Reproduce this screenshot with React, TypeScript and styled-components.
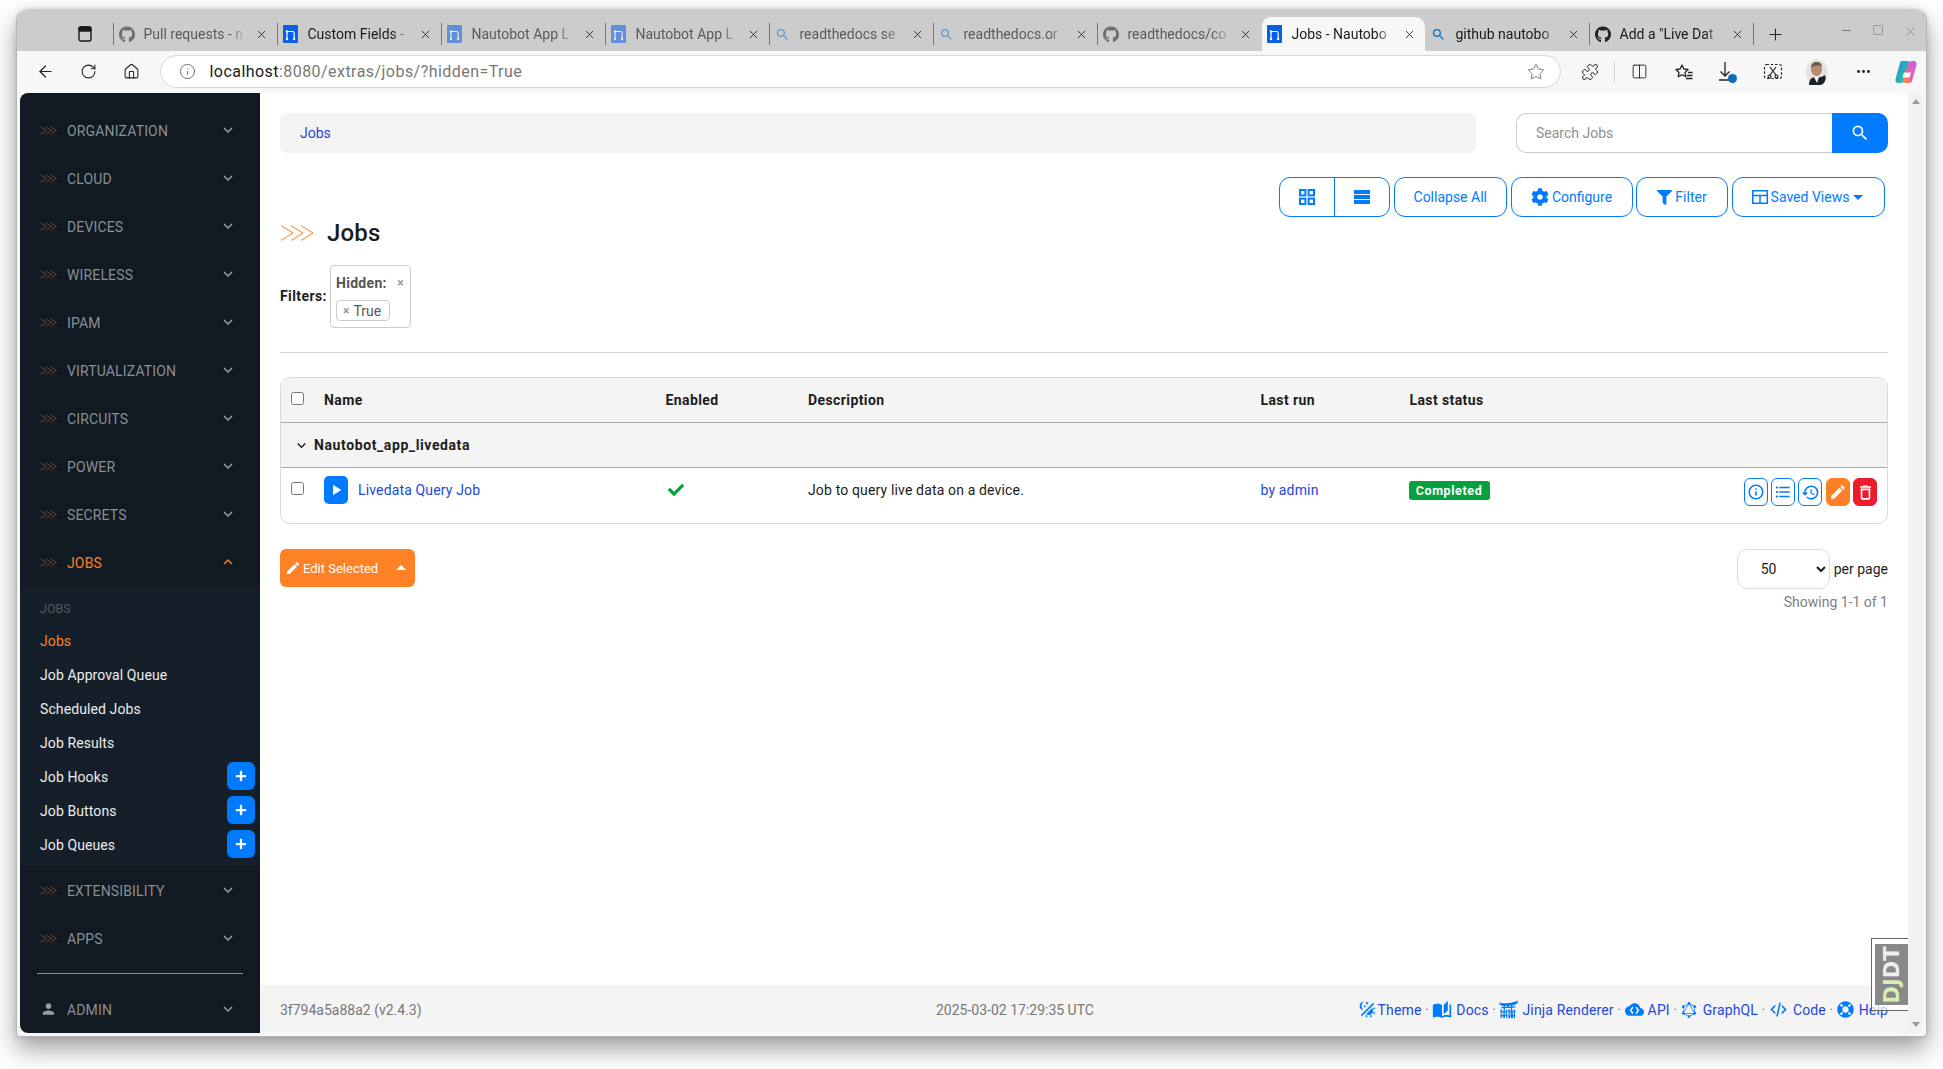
import React from "react";
import styled, { createGlobalStyle } from "styled-components";
import { ArrowLeft, RotateCw, Home, Info, Star, Puzzle, Columns2, MoreHorizontal, Plus, X, Minus, Square } from "lucide-react";
import { FaGithub, FaCog, FaFilter, FaCheck, FaPlus, FaLifeRing } from "react-icons/fa";
import {
  MdKeyboardArrowDown,
  MdKeyboardArrowUp,
  MdSearch,
  MdEdit,
  MdPlayArrow,
  MdPerson,
  MdInfoOutline,
  MdFormatListBulleted,
  MdHistory,
  MdOutlineDelete,
  MdArrowDropDown,
  MdArrowDropUp,
} from "react-icons/md";
import { SiJinja, SiGraphql } from "react-icons/si";

const FONT = `Roboto, "Noto Sans", sans-serif`;
const BLUE = "#007bff";
const LINK = "#2348dc";
const ORANGE = "#ff8125";

const Global = createGlobalStyle`
  html, body { margin: 0; padding: 0; background: #fff; overflow: hidden; }
  body { font-family: ${FONT}; font-size: 14px; color: #1c1c1c; }
  * { box-sizing: border-box; }
`;

const Desktop = styled.div`
  width: 1943px;
  height: 1069px;
  padding: 9px 16px 32px;
  background: #fff;
`;

const Window = styled.div`
  width: 1911px;
  height: 1028px;
  display: flex;
  flex-direction: column;
  background: #f7f7f7;
  border: 1px solid #b5b5b5;
  border-top-color: #ccc;
  border-radius: 12px 12px 4px 4px;
  box-shadow: 0 12px 26px rgba(0, 0, 0, 0.38), 0 0 6px rgba(0, 0, 0, 0.12);
  overflow: hidden;
`;

const TabStrip = styled.div`
  height: 41px;
  flex: none;
  display: flex;
  align-items: flex-end;
  background: #cccccc;
`;

const StripButton = styled.div`
  width: 95.5px;
  height: 34px;
  flex: none;
  display: flex;
  align-items: center;
  justify-content: flex-end;
  padding-right: 21px;
  color: #222;
`;

const Tab = styled.div<{ $active?: boolean; $noDivider?: boolean }>`
  width: 164px;
  height: 34px;
  flex: none;
  display: flex;
  align-items: center;
  padding: 0 8px 0 5px;
  background: ${(p) => (p.$active ? "#f7f7f7" : "transparent")};
  border-radius: 9px 9px 0 0;
  border-left: 1px solid ${(p) => (p.$noDivider ? "transparent" : "#777")};
  background-clip: padding-box;
  ${(p) => (p.$noDivider ? "" : "border-image: linear-gradient(to bottom, transparent 7px, #777 7px, #777 27px, transparent 27px) 1;")}
`;

const TabIcon = styled.span<{ $dim?: boolean }>`
  width: 16px;
  height: 18px;
  flex: none;
  display: flex;
  align-items: center;
  justify-content: center;
  opacity: ${(p) => (p.$dim ? 0.55 : 1)};
`;

const TabTitle = styled.span<{ $dim?: boolean }>`
  flex: 1;
  margin-left: 9px;
  white-space: nowrap;
  font-size: 14px;
  color: ${(p) => (p.$dim ? "#5a5a5a" : "#1a1a1a")};
  -webkit-mask-image: linear-gradient(to right, #000 78%, transparent 96%);
  mask-image: linear-gradient(to right, #000 78%, transparent 96%);
`;

const TabClose = styled.span`
  width: 14px;
  flex: none;
  margin-left: 3px;
  display: flex;
  justify-content: center;
  color: #222;
`;

const NewTab = styled.div`
  width: 44px;
  height: 34px;
  flex: none;
  display: flex;
  align-items: center;
  justify-content: center;
  color: #222;
  border-left: 1px solid #777;
  border-image: linear-gradient(to bottom, transparent 7px, #777 7px, #777 27px, transparent 27px) 1;
`;

const WindowControls = styled.div`
  margin-left: auto;
  height: 41px;
  display: flex;
  align-items: flex-start;
  padding: 14px 8px 0 0;
  gap: 19px;
  color: #777;
`;

const Toolbar = styled.div`
  height: 42px;
  flex: none;
  display: flex;
  align-items: center;
  background: #f7f7f7;
  padding: 0 0 1px 19px;
  color: #222;
`;

const NavButton = styled.span`
  width: 43.5px;
  flex: none;
  display: flex;
  align-items: center;
`;

const AddressBar = styled.div`
  width: 1401px;
  height: 33px;
  flex: none;
  margin-left: -7px;
  display: flex;
  align-items: center;
  background: #fff;
  border: 1px solid #d6d6d6;
  border-radius: 17px;
  padding: 0 15px 0 18px;
`;

const Url = styled.div`
  margin-left: 14px;
  font-size: 16px;
  color: #777;
  letter-spacing: 0.45px;
`;

const UrlHost = styled.span`
  color: #1a1a1a;
`;

const StarSlot = styled.span`
  margin-left: auto;
  display: flex;
  color: #666;
`;

const ToolIcons = styled.div`
  display: flex;
  align-items: center;
  margin-left: 20px;
`;

const ToolIcon = styled.span<{ $w: number }>`
  width: ${(p) => p.$w}px;
  flex: none;
  display: flex;
  justify-content: center;
  align-items: center;
`;

const ToolSep = styled.span`
  width: 1px;
  height: 20px;
  background: #d4d4d4;
  flex: none;
`;

const Page = styled.div`
  flex: 1;
  min-height: 0;
  margin: 0 3px 3px;
  display: flex;
  background: #fff;
  border-radius: 8px;
  overflow: hidden;
`;

const Sidebar = styled.nav`
  width: 240px;
  flex: none;
  display: flex;
  flex-direction: column;
  padding-top: 13px;
  background: #111923;
`;

const NavItem = styled.div<{ $open?: boolean }>`
  height: 48px;
  flex: none;
  display: flex;
  align-items: center;
  padding: 0 20px;
  font-size: 14px;
  letter-spacing: 0.15px;
  color: ${(p) => (p.$open ? "#ff7f26" : "#8a8f94")};
`;

const NavMark = styled.span`
  width: 17px;
  flex: none;
  margin-right: 10px;
  display: flex;
  justify-content: center;
`;

const NavLabel = styled.span`
  flex: 1;
  padding-top: 1px;
`;

const NavCaret = styled.span<{ $open?: boolean }>`
  flex: none;
  display: flex;
  margin-right: 3px;
  color: ${(p) => (p.$open ? "#ff7f26" : "#9a9ea3")};
`;

const SubMenu = styled.div`
  height: 280px;
  flex: none;
  padding-bottom: 5px;
  background: #141f2a;
`;

const SubHeading = styled.div`
  height: 37px;
  padding: 8px 0 0 20px;
  display: flex;
  align-items: center;
  font-size: 12.5px;
  color: #515a63;
`;

const SubRow = styled.div<{ $current?: boolean }>`
  height: 34px;
  display: flex;
  align-items: center;
  justify-content: space-between;
  padding: 0 5px 0 20px;
  font-size: 14px;
  letter-spacing: 0.1px;
  color: ${(p) => (p.$current ? "#ff7f26" : "#ececec")};
`;

const SubText = styled.span`
  padding-top: 1px;
`;

const AddButton = styled.span`
  width: 28px;
  height: 28px;
  display: flex;
  align-items: center;
  justify-content: center;
  background: ${BLUE};
  border-radius: 6px;
  color: #fff;
`;

const SideRule = styled.div`
  margin: auto 17px 11px;
  height: 1px;
  background: #8b8f94;
`;

const Main = styled.main`
  flex: 1;
  min-width: 0;
  position: relative;
  display: flex;
  flex-direction: column;
`;

const Content = styled.div`
  flex: 1;
  padding: 20px 20px 0;
`;

const TopRow = styled.div`
  display: flex;
  align-items: stretch;
  justify-content: space-between;
  height: 40px;
`;

const Breadcrumb = styled.div`
  width: 1196px;
  display: flex;
  align-items: center;
  padding-left: 20px;
  background: #f4f4f4;
  border-radius: 7px;
`;

const TextLink = styled.a`
  color: ${LINK};
  text-decoration: none;
`;

const SearchBox = styled.div`
  width: 372px;
  display: flex;
`;

const SearchField = styled.div`
  flex: 1;
  display: flex;
  align-items: center;
  padding-left: 19px;
  border: 1px solid #ccc;
  border-right: none;
  border-radius: 10px 0 0 10px;
  color: #8f8f8f;
`;

const SearchButton = styled.div`
  width: 56px;
  display: flex;
  align-items: center;
  justify-content: center;
  background: ${BLUE};
  color: #fff;
  border-radius: 0 10px 10px 0;
`;

const ActionBar = styled.div`
  margin-top: 24px;
  height: 40px;
  display: flex;
  justify-content: flex-end;
  gap: 3.5px;
  padding-right: 3.5px;
`;

const ButtonGroup = styled.div`
  display: flex;
  width: 111.5px;
  border: 1px solid ${BLUE};
  border-radius: 11px;
  color: ${BLUE};
`;

const GroupCell = styled.span<{ $divider?: boolean }>`
  flex: 1;
  display: flex;
  align-items: center;
  justify-content: center;
  border-left: ${(p) => (p.$divider ? `1px solid ${BLUE}` : "none")};
`;

const ToolButton = styled.button<{ $w: number }>`
  width: ${(p) => p.$w}px;
  display: flex;
  align-items: center;
  justify-content: center;
  gap: 3px;
  padding: 0;
  background: #fff;
  border: 1px solid ${BLUE};
  border-radius: 11px;
  color: ${BLUE};
  font: 14px ${FONT};
`;

const TitleRow = styled.div`
  height: 32px;
  display: flex;
  align-items: center;
  gap: 13px;
`;

const Title = styled.h1`
  margin: 0;
  font-size: 24px;
  font-weight: 500;
  letter-spacing: 0.2px;
  color: #1c1c1c;
`;

const FilterRow = styled.div`
  margin-top: 16px;
  display: flex;
  align-items: center;
  gap: 4px;
`;

const FilterLabel = styled.span`
  width: 46px;
  padding-bottom: 2px;
  font-weight: 700;
  font-size: 14px;
  letter-spacing: 0.4px;
`;

const FilterBox = styled.div`
  width: 81px;
  height: 63px;
  padding: 6px 5px;
  display: flex;
  flex-direction: column;
  gap: 6px;
  border: 1px solid #ccc;
  border-radius: 4px;
`;

const FilterHead = styled.div`
  height: 24px;
  display: flex;
  align-items: center;
  justify-content: space-between;
  font-weight: 700;
  letter-spacing: 0.3px;
  color: #555;
`;

const RemoveMark = styled.span`
  font-size: 12px;
  font-weight: 700;
  color: #999;
  margin-right: 1px;
`;

const FilterTag = styled.div`
  width: 54px;
  height: 22px;
  display: flex;
  align-items: center;
  gap: 3px;
  padding-left: 6px;
  border: 1px solid #ccc;
  border-radius: 4px;
  color: #555;
`;

const Rule = styled.hr`
  margin: 24px 0;
  height: 1px;
  border: none;
  background: #d6d6d6;
`;

const Table = styled.div`
  height: 147px;
  border: 1px solid #d9d9d9;
  border-radius: 10px;
  overflow: hidden;
`;

const COLUMNS = "43px 341.5px 142.5px 452.5px 149px 1fr auto";

const HeadRow = styled.div`
  height: 45px;
  display: grid;
  grid-template-columns: ${COLUMNS};
  align-items: center;
  background: #f4f4f4;
  border-bottom: 1px solid #aaa;
  font-weight: 700;
  letter-spacing: 0.4px;
`;

const GroupRow = styled.div`
  height: 45px;
  display: flex;
  align-items: center;
  gap: 4px;
  padding-left: 12px;
  background: #f4f4f4;
  border-bottom: 1px solid #aaa;
  font-weight: 700;
  letter-spacing: 0.6px;
  color: #1c1c1c;
`;

const BodyRow = styled.div`
  display: grid;
  grid-template-columns: ${COLUMNS};
  align-items: center;
  padding-top: 6px;
  letter-spacing: 0.15px;
`;

const CheckCell = styled.span<{ $up: number }>`
  display: flex;
  padding-left: 10px;
  margin-top: -${(p) => p.$up}px;
`;

const Check = styled.input`
  width: 13px;
  height: 13px;
  margin: 0;
`;

const NameCell = styled.span`
  display: flex;
  align-items: center;
  gap: 10px;
`;

const RunButton = styled.span`
  width: 24px;
  height: 28px;
  display: flex;
  align-items: center;
  justify-content: center;
  background: ${BLUE};
  border-radius: 5px;
  color: #fff;
`;

const Badge = styled.span`
  display: flex;
  width: 81px;
  height: 19px;
  margin-left: -1px;
  align-items: center;
  justify-content: center;
  background: #06a03f;
  border-radius: 3px;
  color: #fff;
  font-size: 12.5px;
  font-weight: 700;
  letter-spacing: 0.6px;
`;

const EnabledMark = styled.span`
  display: flex;
  padding-left: 2px;
  color: #06a03f;
`;

const RowActions = styled.span`
  display: flex;
  gap: 3.3px;
  padding: 4px 10px 0 0;
`;

const RowAction = styled.span<{ $fill?: string }>`
  width: 24px;
  height: 28px;
  display: flex;
  align-items: center;
  justify-content: center;
  border-radius: 6px;
  border: 1px solid ${(p) => p.$fill ?? BLUE};
  background: ${(p) => p.$fill ?? "#fff"};
  color: ${(p) => (p.$fill ? "#fff" : BLUE)};
`;

const BelowTable = styled.div`
  margin-top: 25px;
  display: flex;
  justify-content: space-between;
  align-items: flex-start;
`;

const EditButton = styled.button`
  width: 135px;
  height: 38px;
  display: flex;
  align-items: center;
  gap: 2px;
  padding: 0 0 0 5px;
  background: ${ORANGE};
  border: none;
  border-radius: 6px;
  color: #fff;
  font: 13px ${FONT};
`;

const EditCaret = styled.span`
  margin-left: auto;
  margin-right: 2px;
  display: flex;
`;

const Paging = styled.div`
  display: flex;
  flex-direction: column;
  align-items: flex-end;
  gap: 5px;
`;

const PerPage = styled.label`
  display: flex;
  align-items: center;
  gap: 4px;
`;

const PageSelect = styled.select`
  width: 93px;
  height: 40px;
  padding-left: 19px;
  background: #fff;
  border: 1px solid #ddd;
  border-radius: 10px;
  color: #1c1c1c;
  font: 14px ${FONT};
`;

const Showing = styled.div`
  color: #808080;
`;

const Footer = styled.footer`
  height: 48px;
  flex: none;
  display: grid;
  grid-template-columns: 656px auto 1fr;
  align-items: center;
  padding: 1px 20px 0;
  background: #f4f4f4;
  color: #777;
`;

const FooterLinks = styled.div`
  display: flex;
  justify-content: flex-end;
  align-items: center;
  gap: 3.5px;
  letter-spacing: 0.15px;
  color: #777;
`;

const FooterLink = styled.a<{ $gap?: number }>`
  display: flex;
  align-items: center;
  gap: ${(p) => p.$gap ?? 4}px;
  color: ${LINK};
  text-decoration: none;
`;

const FooterIcon = styled.span`
  display: flex;
  color: ${BLUE};
`;

const Debug = styled.div`
  position: absolute;
  right: 0;
  bottom: 22px;
  width: 37px;
  height: 73px;
  padding: 5px 0 5px 3px;
  background: rgba(255, 255, 255, 0.7);
  border: 1px solid #666;
  border-right: none;
`;

const DebugInner = styled.div`
  height: 100%;
  display: flex;
  align-items: center;
  justify-content: center;
  background: #888;
`;

const DebugText = styled.span`
  transform: rotate(-90deg);
  font: 700 21px "DejaVu Sans", sans-serif;
  color: #eee;
  white-space: nowrap;
`;

const DebugAccent = styled.span`
  color: #d6efb4;
`;

const ScrollBar = styled.div`
  width: 15px;
  flex: none;
  display: flex;
  flex-direction: column;
  justify-content: space-between;
  align-items: center;
  padding: 6px 0;
  background: #f1f1f1;
`;

const ScrollArrow = styled.span<{ $down?: boolean }>`
  width: 0;
  height: 0;
  border-left: 4px solid transparent;
  border-right: 4px solid transparent;
  ${(p) => (p.$down ? "border-top: 5px solid #9a9a9a;" : "border-bottom: 5px solid #9a9a9a;")}
`;

const Mark = ({ w, h, color, sw = 1 }: { w: number; h: number; color: string; sw?: number }) => (
  <svg width={w} height={h} viewBox="0 0 34 18" preserveAspectRatio="none" fill="none" stroke={color} strokeWidth={sw}>
    <polyline points="1,1.5 13,9 1,16.5" />
    <polyline points="11,1.5 23,9 11,16.5" />
    <polyline points="21,1.5 33,9 21,16.5" />
  </svg>
);

const NFav = () => (
  <svg width="15" height="18" viewBox="0 0 15 18">
    <rect width="15" height="18" rx="1" fill="#0a5fe6" />
    <path d="M4 14V6.500h5.500a1.600 1.600 0 0 1 1.600 1.600V14" fill="none" stroke="#fff" strokeWidth="1.2" />
    <circle cx="4" cy="14" r="1.200" fill="#fff" />
    <circle cx="11.100" cy="14" r="1.200" fill="#fff" />
    <circle cx="4" cy="6.500" r="1.200" fill="#fff" />
  </svg>
);

const SidePanelIcon = () => (
  <svg width="14" height="16" viewBox="0 0 14 16" fill="none" stroke="#1a1a1a" strokeWidth="1.4">
    <rect x="1" y="1" width="12" height="14" rx="2" />
    <rect x="1" y="1" width="12" height="4" rx="1.5" fill="#1a1a1a" />
  </svg>
);

const GridIcon = () => (
  <svg width="16" height="16" viewBox="0 0 16 16" fill="none" stroke={BLUE} strokeWidth="2">
    <rect x="1" y="1" width="5.4" height="5.4" />
    <rect x="9.6" y="1" width="5.4" height="5.4" />
    <rect x="1" y="9.6" width="5.4" height="5.4" />
    <rect x="9.6" y="9.6" width="5.4" height="5.4" />
  </svg>
);

const BarsIcon = () => (
  <svg width="16" height="14" viewBox="0 0 16 14" fill={BLUE}>
    <rect width="16" height="4" />
    <rect y="5" width="16" height="4" />
    <rect y="10" width="16" height="4" />
  </svg>
);

const ViewsIcon = () => (
  <svg width="16" height="14" viewBox="0 0 16 14" fill="none" stroke={BLUE} strokeWidth="1.5">
    <rect x="0.75" y="0.75" width="14.5" height="12.5" />
    <path d="M1 5.5h14M8 5.5v8" />
  </svg>
);

const ThemeIcon = () => (
  <svg width="19" height="19" viewBox="0 0 24 24" fill={BLUE}>
    <path d="M7.5,2C5.71,3.15 4.5,5.18 4.5,7.5C4.5,9.82 5.71,11.85 7.53,13C4.46,13 2,10.54 2,7.5A5.5,5.5 0 0,1 7.5,2M19.07,3.5L20.5,4.93L4.93,20.5L3.5,19.07L19.07,3.5M12.89,5.93L11.41,5L9.97,6L10.39,4.3L9,3.24L10.75,3.12L11.33,1.47L12,3.1L13.73,3.13L12.38,4.26L12.89,5.93M9.59,9.54L8.43,8.81L7.31,9.59L7.65,8.27L6.56,7.44L7.92,7.35L8.37,6.06L8.88,7.33L10.24,7.36L9.19,8.23L9.59,9.54M19,13.5A5.5,5.5 0 0,1 13.5,19C12.28,19 11.15,18.6 10.24,17.93L17.93,10.24C18.6,11.15 19,12.28 19,13.5M14.6,20.08L17.37,18.93L17.13,22.28L14.6,20.08M18.93,17.38L20.08,14.61L22.28,17.15L18.93,17.38M20.08,12.42L18.94,9.64L22.28,9.88L20.08,12.42M9.63,18.93L12.4,20.08L9.87,22.27L9.63,18.93Z" />
  </svg>
);

const BookIcon = () => (
  <svg width="20" height="20" viewBox="0 0 24 24" fill={BLUE}>
    <path d="M19 1L14 6V17L19 12.5V1M21 5V18.5C19.9 18.15 18.7 18 17.5 18C15.8 18 13.35 18.65 12 19.5V6C10.55 4.9 8.45 4.5 6.5 4.5C4.55 4.5 2.45 4.9 1 6V20.65C1 20.9 1.25 21.15 1.5 21.15C1.6 21.15 1.65 21.1 1.75 21.1C3.1 20.45 5.05 20 6.5 20C8.45 20 10.55 20.4 12 21.5C13.35 20.65 15.8 20 17.5 20C19.15 20 20.85 20.3 22.25 21.05C22.35 21.1 22.4 21.1 22.5 21.1C22.75 21.1 23 20.85 23 20.6V6C22.4 5.55 21.75 5.25 21 5Z" />
  </svg>
);

const XmlIcon = () => (
  <svg width="19" height="19" viewBox="0 0 24 24" fill={BLUE}>
    <path d="M12.89,3L14.85,3.4L11.11,21L9.15,20.6L12.89,3M19.59,12L16,8.41V5.58L22.42,12L16,18.41V15.58L19.59,12M1.58,12L8,5.58V8.41L4.41,12L8,15.58V18.41L1.58,12Z" />
  </svg>
);

const CloudIcon = () => (
  <svg width="19" height="17" viewBox="0 0 24 20">
    <path fill={BLUE} d="M19.35 6.04C18.67 2.59 15.64 0 12 0 9.11 0 6.6 1.64 5.35 4.04 2.34 4.36 0 6.91 0 10c0 3.31 2.69 6 6 6h13c2.76 0 5-2.24 5-5 0-2.64-2.05-4.78-4.65-4.96z" transform="translate(0 2)" />
    <path fill="none" stroke="#fff" strokeWidth="1.8" d="M10 7l-3 4 3 4M14 7l3 4-3 4" />
  </svg>
);

const FavStar = () => (
  <svg width="20" height="20" viewBox="0 0 20 20" fill="none" stroke="#222" strokeWidth="1.3" strokeLinejoin="round">
    <path d="M8 3l1.9 4 4.1.5-3 3 .8 4.3L8 12.7 4.200 14.800 5 10.500l-3-3 4.100-.5z" />
    <path d="M14 10.500h4.500M13 13.500h5.500M12 16.500h6.500" />
  </svg>
);

const DownloadIcon = () => (
  <svg width="22" height="24" viewBox="0 0 22 24">
    <path d="M8 2v14M3.500 11.500L8 16l4.500-4.500M2 20h12" fill="none" stroke="#222" strokeWidth="1.3" />
    <circle cx="15.500" cy="18.500" r="4.500" fill="#0f6cbd" />
  </svg>
);

const ShotIcon = () => (
  <svg width="20" height="20" viewBox="0 0 20 20" fill="none" stroke="#222" strokeWidth="1.2">
    <rect x="1.500" y="2.500" width="17" height="14" rx="2" strokeDasharray="2.500 1.800" />
    <path d="M7 5l6 8M13 5l-6 8" />
    <circle cx="6.500" cy="14.500" r="1.500" />
    <circle cx="13.500" cy="14.500" r="1.500" />
  </svg>
);

const Avatar = () => (
  <svg width="26" height="26" viewBox="0 0 26 26">
    <ellipse cx="13" cy="13" rx="11" ry="13" fill="#e3e3e0" />
    <ellipse cx="12.500" cy="10" rx="5.500" ry="7" fill="#b98a72" />
    <path d="M7 9c0-5 3-6 5.500-6S18 4 18 8c-2-2-8-2-11 1z" fill="#6f5a4d" />
    <path d="M5 26c0-6 3-8 7-8s5 1 9-2c1 3 1 6-2 9-4 2-10 2-14 1z" fill="#1d2228" />
    <path d="M10 18l3 6 2-6z" fill="#f4f4f4" />
  </svg>
);

const CopilotIcon = () => (
  <svg width="24" height="24" viewBox="0 0 24 24">
    <defs>
      <linearGradient id="cpA" x1="0" y1="0" x2="1" y2="1">
        <stop offset="0" stopColor="#1f8fe6" />
        <stop offset="1" stopColor="#2fcf8c" />
      </linearGradient>
      <linearGradient id="cpB" x1="1" y1="0" x2="0" y2="1">
        <stop offset="0" stopColor="#b36bf0" />
        <stop offset="0.6" stopColor="#ef5fa7" />
        <stop offset="1" stopColor="#f7a21b" />
      </linearGradient>
    </defs>
    <path d="M8 1h6c1 0 1.500 1 1 2L10 20c-.5 2-2 3-4 3H4c-2 0-3-2-2.500-4L6 3c.3-1.200 1-2 2-2z" fill="url(#cpA)" />
    <path d="M16 23h-6c-1 0-1.500-1-1-2l5-17c.5-2 2-3 4-3h2c2 0 3 2 2.500 4L18 21c-.3 1.200-1 2-2 2z" fill="url(#cpB)" />
    <path d="M8.500 17.500h7l1.500-5h-7z" fill="#fff" />
  </svg>
);

const tabs: { title: string; icon: "gh" | "n" | "q"; dim?: boolean; active?: boolean; noDivider?: boolean }[] = [
  { title: "Pull requests - n", icon: "gh", dim: true },
  { title: "Custom Fields - ", icon: "n" },
  { title: "Nautobot App L", icon: "n", dim: true },
  { title: "Nautobot App L", icon: "n", dim: true },
  { title: "readthedocs se", icon: "q", dim: true },
  { title: "readthedocs.or", icon: "q", dim: true },
  { title: "readthedocs/co", icon: "gh", dim: true },
  { title: "Jobs - Nautobo", icon: "n", active: true, noDivider: true },
  { title: "github nautobo", icon: "q", noDivider: true },
  { title: 'Add a "Live Dat', icon: "gh" },
];

const navTop = ["ORGANIZATION", "CLOUD", "DEVICES", "WIRELESS", "IPAM", "VIRTUALIZATION", "CIRCUITS", "POWER", "SECRETS"];
const subItems: { label: string; add?: boolean; current?: boolean }[] = [
  { label: "Jobs", current: true },
  { label: "Job Approval Queue" },
  { label: "Scheduled Jobs" },
  { label: "Job Results" },
  { label: "Job Hooks", add: true },
  { label: "Job Buttons", add: true },
  { label: "Job Queues", add: true },
];

const SideEntry = ({ label, open }: { label: string; open?: boolean }) => (
  <NavItem $open={open}>
    <NavMark>
      <Mark w={17} h={9} color="#cc6f2c" />
    </NavMark>
    <NavLabel>{label}</NavLabel>
    <NavCaret $open={open}>{open ? <MdKeyboardArrowUp size={18} /> : <MdKeyboardArrowDown size={18} />}</NavCaret>
  </NavItem>
);

const TabFavicon = ({ kind }: { kind: "gh" | "n" | "q" }) => {
  if (kind === "gh") return <FaGithub size={17} color="#222" />;
  if (kind === "n") return <NFav />;
  return <MdSearch size={15} color="#0a6cc8" />;
};

export default function App() {
  return (
    <Desktop>
      <Global />
      <Window>
        <TabStrip>
          <StripButton>
            <SidePanelIcon />
          </StripButton>
          {tabs.map((t, i) => (
            <Tab key={i} $active={t.active} $noDivider={t.noDivider}>
              <TabIcon $dim={t.dim}>
                <TabFavicon kind={t.icon} />
              </TabIcon>
              <TabTitle $dim={t.dim}>{t.title}</TabTitle>
              <TabClose>
                <X size={13} strokeWidth={1.6} />
              </TabClose>
            </Tab>
          ))}
          <NewTab>
            <Plus size={19} strokeWidth={1.3} />
          </NewTab>
          <WindowControls>
            <Minus size={13} />
            <Square size={12} strokeWidth={1.2} />
            <X size={15} strokeWidth={1.1} />
          </WindowControls>
        </TabStrip>
        <Toolbar>
          <NavButton>
            <ArrowLeft size={19} strokeWidth={1.5} />
          </NavButton>
          <NavButton>
            <RotateCw size={17} strokeWidth={1.5} />
          </NavButton>
          <NavButton>
            <Home size={17} strokeWidth={1.5} />
          </NavButton>
          <AddressBar>
            <Info size={17} strokeWidth={1.3} color="#666" />
            <Url>
              <UrlHost>localhost</UrlHost>:8080/extras/jobs/?hidden=True
            </Url>
            <StarSlot>
              <Star size={18} strokeWidth={1.2} />
            </StarSlot>
          </AddressBar>
          <ToolIcons>
            <ToolIcon $w={18}>
              <Puzzle size={18} strokeWidth={1.3} />
            </ToolIcon>
            <ToolIcon $w={15}>
              <span />
            </ToolIcon>
            <ToolSep />
            <ToolIcon $w={49}>
              <Columns2 size={17} strokeWidth={1.3} />
            </ToolIcon>
            <ToolIcon $w={40}>
              <FavStar />
            </ToolIcon>
            <ToolIcon $w={48}>
              <DownloadIcon />
            </ToolIcon>
            <ToolIcon $w={42}>
              <ShotIcon />
            </ToolIcon>
            <ToolIcon $w={46}>
              <Avatar />
            </ToolIcon>
            <ToolIcon $w={48}>
              <MoreHorizontal size={17} strokeWidth={2.2} />
            </ToolIcon>
            <ToolIcon $w={36}>
              <CopilotIcon />
            </ToolIcon>
          </ToolIcons>
        </Toolbar>
        <Page>
          <Sidebar>
            {navTop.map((n) => (
              <SideEntry key={n} label={n} />
            ))}
            <SideEntry label="JOBS" open />
            <SubMenu>
              <SubHeading>JOBS</SubHeading>
              {subItems.map((s) => (
                <SubRow key={s.label} $current={s.current}>
                  <SubText>{s.label}</SubText>
                  {s.add && (
                    <AddButton>
                      <FaPlus size={12} />
                    </AddButton>
                  )}
                </SubRow>
              ))}
            </SubMenu>
            <SideEntry label="EXTENSIBILITY" />
            <SideEntry label="APPS" />
            <SideRule />
            <NavItem>
              <NavMark>
                <MdPerson size={22} color="#9a9ea3" />
              </NavMark>
              <NavLabel>ADMIN</NavLabel>
              <NavCaret>
                <MdKeyboardArrowDown size={18} />
              </NavCaret>
            </NavItem>
          </Sidebar>
          <Main>
            <Content>
              <TopRow>
                <Breadcrumb>
                  <TextLink>Jobs</TextLink>
                </Breadcrumb>
                <SearchBox>
                  <SearchField>Search Jobs</SearchField>
                  <SearchButton>
                    <MdSearch size={20} />
                  </SearchButton>
                </SearchBox>
              </TopRow>
              <ActionBar>
                <ButtonGroup>
                  <GroupCell>
                    <GridIcon />
                  </GroupCell>
                  <GroupCell $divider>
                    <BarsIcon />
                  </GroupCell>
                </ButtonGroup>
                <ToolButton $w={113.5}>Collapse All</ToolButton>
                <ToolButton $w={122}>
                  <FaCog size={18} />
                  Configure
                </ToolButton>
                <ToolButton $w={92}>
                  <FaFilter size={15} />
                  Filter
                </ToolButton>
                <ToolButton $w={153}>
                  <ViewsIcon />
                  Saved Views
                  <MdArrowDropDown size={24} style={{ margin: "0 -6px" }} />
                </ToolButton>
              </ActionBar>
              <TitleRow>
                <Mark w={34} h={18} color={ORANGE} />
                <Title>Jobs</Title>
              </TitleRow>
              <FilterRow>
                <FilterLabel>Filters:</FilterLabel>
                <FilterBox>
                  <FilterHead>
                    Hidden:
                    <RemoveMark>×</RemoveMark>
                  </FilterHead>
                  <FilterTag>
                    <RemoveMark>×</RemoveMark>
                    True
                  </FilterTag>
                </FilterBox>
              </FilterRow>
              <Rule />
              <Table>
                <HeadRow>
                  <CheckCell $up={4}>
                    <Check type="checkbox" />
                  </CheckCell>
                  <span>Name</span>
                  <span>Enabled</span>
                  <span>Description</span>
                  <span>Last run</span>
                  <span>Last status</span>
                  <span />
                </HeadRow>
                <GroupRow>
                  <MdKeyboardArrowDown size={17} />
                  Nautobot_app_livedata
                </GroupRow>
                <BodyRow>
                  <CheckCell $up={4}>
                    <Check type="checkbox" />
                  </CheckCell>
                  <NameCell>
                    <RunButton>
                      <MdPlayArrow size={18} />
                    </RunButton>
                    <TextLink>Livedata Query Job</TextLink>
                  </NameCell>
                  <EnabledMark>
                    <FaCheck size={16} />
                  </EnabledMark>
                  <span>Job to query live data on a device.</span>
                  <TextLink>by admin</TextLink>
                  <span>
                    <Badge>Completed</Badge>
                  </span>
                  <RowActions>
                    <RowAction>
                      <MdInfoOutline size={18} />
                    </RowAction>
                    <RowAction>
                      <MdFormatListBulleted size={18} />
                    </RowAction>
                    <RowAction>
                      <MdHistory size={19} />
                    </RowAction>
                    <RowAction $fill={ORANGE}>
                      <MdEdit size={18} />
                    </RowAction>
                    <RowAction $fill="#ec1c2c">
                      <MdOutlineDelete size={19} />
                    </RowAction>
                  </RowActions>
                </BodyRow>
              </Table>
              <BelowTable>
                <EditButton>
                  <MdEdit size={16} />
                  <span>Edit Selected</span>
                  <EditCaret>
                    <MdArrowDropUp size={24} />
                  </EditCaret>
                </EditButton>
                <Paging>
                  <PerPage>
                    <PageSelect defaultValue="50">
                      <option>25</option>
                      <option>50</option>
                      <option>100</option>
                    </PageSelect>
                    per page
                  </PerPage>
                  <Showing>Showing 1-1 of 1</Showing>
                </Paging>
              </BelowTable>
            </Content>
            <Footer>
              <span>3f794a5a88a2 (v2.4.3)</span>
              <span>2025-03-02 17:29:35 UTC</span>
              <FooterLinks>
                <FooterLink $gap={1}>
                  <FooterIcon>
                    <ThemeIcon />
                  </FooterIcon>
                  Theme
                </FooterLink>
                ·
                <FooterLink>
                  <FooterIcon>
                    <BookIcon />
                  </FooterIcon>
                  Docs
                </FooterLink>
                ·
                <FooterLink>
                  <FooterIcon>
                    <SiJinja size={19} />
                  </FooterIcon>
                  Jinja Renderer
                </FooterLink>
                ·
                <FooterLink>
                  <FooterIcon>
                    <CloudIcon />
                  </FooterIcon>
                  API
                </FooterLink>
                ·
                <FooterLink $gap={6}>
                  <FooterIcon>
                    <SiGraphql size={16} />
                  </FooterIcon>
                  GraphQL
                </FooterLink>
                ·
                <FooterLink $gap={5}>
                  <FooterIcon>
                    <XmlIcon />
                  </FooterIcon>
                  Code
                </FooterLink>
                ·
                <FooterLink $gap={5}>
                  <FooterIcon>
                    <FaLifeRing size={17} />
                  </FooterIcon>
                  Help
                </FooterLink>
              </FooterLinks>
            </Footer>
            <Debug>
              <DebugInner>
                <DebugText>
                  <DebugAccent>DJ</DebugAccent>DT
                </DebugText>
              </DebugInner>
            </Debug>
          </Main>
          <ScrollBar>
            <ScrollArrow />
            <ScrollArrow $down />
          </ScrollBar>
        </Page>
      </Window>
    </Desktop>
  );
}
